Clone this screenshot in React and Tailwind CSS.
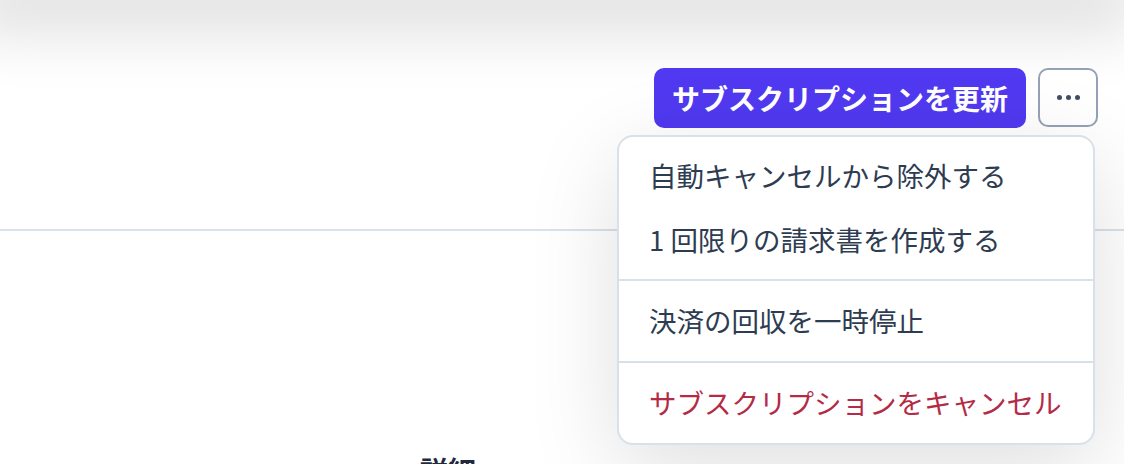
export default function App() {
  return (
    <div
      className="relative h-[464px] w-full overflow-hidden bg-white"
      style={{ fontFamily: '"Noto Sans CJK JP", "Noto Sans", sans-serif' }}
    >
      {/* shadow of the sticky bar just above the viewport */}
      <div className="mr-[20px] h-0 rounded-br-[40px] shadow-[0_0_60px_34px_rgba(0,0,0,0.12)]" />

      <div className="flex justify-end gap-3 pr-[26px] pt-[68px]">
        <button className="h-[60px] rounded-[10px] bg-[#5039f0] px-[18px] text-[28px] font-bold leading-none text-white">
          サブスクリプションを更新
        </button>
        <button className="flex h-[59px] w-[60px] items-center justify-center gap-[4px] rounded-[10px] border-2 border-[#95a1b6] bg-white">
          <span className="h-[5px] w-[5px] rounded-full bg-[#414d63]" />
          <span className="h-[5px] w-[5px] rounded-full bg-[#414d63]" />
          <span className="h-[5px] w-[5px] rounded-full bg-[#414d63]" />
        </button>
      </div>

      <div className="mt-[101px] border-t-2 border-[#d9e1ea]" />

      <div className="pl-[420px] pt-[225px]">
        <h2 className="text-[28px] font-bold leading-none text-[#1f2a3c]">詳細</h2>
      </div>

      {/* dropdown menu */}
      <div className="absolute left-[617px] top-[135px] w-[478px] overflow-hidden rounded-[16px] border-2 border-[#d8e0ea] bg-white shadow-[0_24px_90px_rgba(0,0,0,0.13)]">
        <div className="py-[7px]">
          <div className="flex h-[64px] items-center whitespace-nowrap pl-[30px] text-[27.5px] text-[#2e3c52]">
            自動キャンセルから除外する
          </div>
          <div className="flex h-[64px] items-center whitespace-nowrap pl-[30px] text-[27.5px] text-[#2e3c52]">
            1 回限りの請求書を作成する
          </div>
        </div>
        <div className="border-t-2 border-[#d8e0ea] py-[8px]">
          <div className="flex h-[64px] items-center whitespace-nowrap pl-[30px] text-[27.5px] text-[#2e3c52]">
            決済の回収を一時停止
          </div>
        </div>
        <div className="border-t-2 border-[#d8e0ea] py-[8px]">
          <div className="flex h-[64px] items-center whitespace-nowrap pl-[30px] text-[27.5px] text-[#b32b45]">
            サブスクリプションをキャンセル
          </div>
        </div>
      </div>
    </div>
  );
}
